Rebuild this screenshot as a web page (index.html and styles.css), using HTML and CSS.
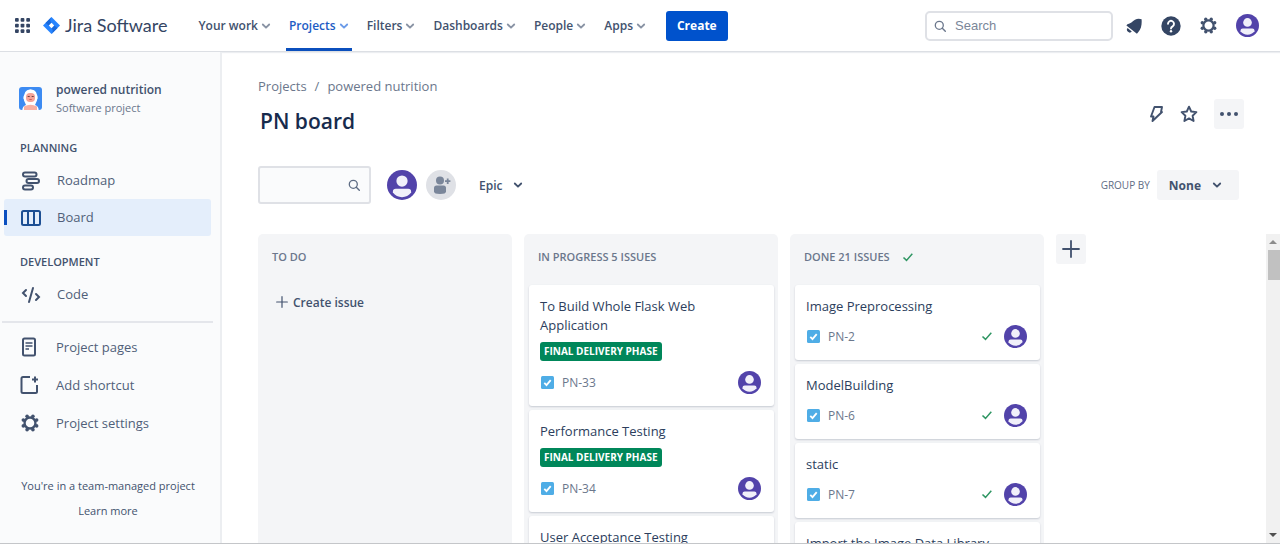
FILE: index.html
```html
<!DOCTYPE html>
<html lang="en">
<head>
<meta charset="utf-8">
<title>PN board - Jira Software</title>
<link rel="stylesheet" href="styles.css">
</head>
<body>
<svg class="sprite" aria-hidden="true">
  <symbol id="chevron" viewBox="0 0 10 10"><path d="M1.800 3.500 5 6.700l3.200-3.200" fill="none" stroke="currentColor" stroke-width="1.800" stroke-linecap="round" stroke-linejoin="round"/></symbol>
  <symbol id="search" viewBox="0 0 14 14"><circle cx="6.300" cy="6.300" r="4" fill="none" stroke="currentColor" stroke-width="1.300"/><path d="m9.300 9.300 3 3" stroke="currentColor" stroke-width="1.400" stroke-linecap="round"/></symbol>
  <symbol id="gear" viewBox="0 0 20 20"><circle cx="10" cy="10" r="6" fill="none" stroke="currentColor" stroke-width="2.600"/><g fill="currentColor"><circle cx="6.800" cy="2.700" r="2"/><circle cx="13.200" cy="2.700" r="2"/><circle cx="17.300" cy="6.800" r="2"/><circle cx="17.300" cy="13.200" r="2"/><circle cx="13.200" cy="17.300" r="2"/><circle cx="6.800" cy="17.300" r="2"/><circle cx="2.700" cy="13.200" r="2"/><circle cx="2.700" cy="6.800" r="2"/></g></symbol>
  <symbol id="avatar" viewBox="0 0 24 24"><circle cx="12" cy="12" r="12" fill="#5243aa"/><circle cx="12" cy="8.800" r="4.500" fill="#f1f0fa"/><path d="M4.700 17.300q0-2.300 2.300-2.300h10q2.300 0 2.300 2.300v.7A9.500 9.500 0 0 1 12 21.700 9.500 9.500 0 0 1 4.700 18z" fill="#f1f0fa"/></symbol>
  <symbol id="task" viewBox="0 0 13 13"><rect width="13" height="13" rx="1.500" fill="#4fade6"/><path d="m3.300 6.900 2.200 2.200 4.200-5" fill="none" stroke="#fff" stroke-width="1.800"/></symbol>
  <symbol id="tick" viewBox="0 0 12 10"><path d="m1.500 5.500 3 2.900L10.300 1.800" fill="none" stroke="#2f9663" stroke-width="1.500"/></symbol>
  <symbol id="plus" viewBox="0 0 18 18"><path d="M9 1v16M1 9h16" stroke="currentColor" stroke-width="1.800" stroke-linecap="round"/></symbol>
</svg>
<div class="app">
  <header class="topbar">
    <button class="plain switcher" aria-label="Switch to"><svg width="15" height="15" viewBox="0 0 16 16" fill="#344563"><rect width="4" height="4" rx="1"/><rect x="6" width="4" height="4" rx="1"/><rect x="12" width="4" height="4" rx="1"/><rect y="6" width="4" height="4" rx="1"/><rect x="6" y="6" width="4" height="4" rx="1"/><rect x="12" y="6" width="4" height="4" rx="1"/><rect y="12" width="4" height="4" rx="1"/><rect x="6" y="12" width="4" height="4" rx="1"/><rect x="12" y="12" width="4" height="4" rx="1"/></svg></button>
    <a class="brand" href="#"><svg width="17" height="17" viewBox="0 0 17 17"><path d="M8.500 0 17 8.500 8.500 17 0 8.500z" fill="#2684ff"/><path d="M8.500 0Q6 3.500 8.500 5.800L5.800 8.500 2.500 5.900z" fill="#1868db"/><path d="M8.500 17q2.500-3.500 0-5.800l2.700-2.700 3.300 2.600z" fill="#1868db"/><path d="m8.500 5.800 2.700 2.700-2.700 2.700-2.700-2.700z" fill="#fff"/></svg><span>Jira Software</span></a>
    <nav class="menu">
      <button class="plain">Your work<svg class="chev"><use href="#chevron"/></svg></button>
      <button class="plain current">Projects<svg class="chev"><use href="#chevron"/></svg></button>
      <button class="plain">Filters<svg class="chev"><use href="#chevron"/></svg></button>
      <button class="plain">Dashboards<svg class="chev"><use href="#chevron"/></svg></button>
      <button class="plain">People<svg class="chev"><use href="#chevron"/></svg></button>
      <button class="plain">Apps<svg class="chev"><use href="#chevron"/></svg></button>
    </nav>
    <button class="create">Create</button>
    <div class="tools">
      <label class="search"><svg width="14" height="14"><use href="#search"/></svg><input type="text" placeholder="Search" aria-label="Search"></label>
      <button class="plain" aria-label="Notifications"><svg width="16" height="16" viewBox="0 0 16 16"><path d="M15.600 1.300C15.900 6 15.500 10.500 12 14.500L10.900 15.700.4 7.600l1-1.400C4.500 5.800 6.500 3.500 9 1.800Q12 .2 15.600 1.300zM1.600 10l4.200 3.500A2.700 2.700 0 0 1 1.600 10z" fill="#344563"/></svg></button>
      <button class="plain" aria-label="Help"><svg width="20" height="20" viewBox="0 0 20 20"><circle cx="10" cy="10" r="9.700" fill="#344563"/><path d="M7 7.800a3 3 0 1 1 4.600 2.600Q10 11.300 10 12.600" fill="none" stroke="#fff" stroke-width="1.900" stroke-linecap="round"/><circle cx="10" cy="15.300" r="1.200" fill="#fff"/></svg></button>
      <button class="plain" aria-label="Settings"><svg width="17" height="17" viewBox="0 0 20 20"><path d="M10 5.200a4.800 4.800 0 1 0 0 9.600 4.800 4.800 0 0 0 0-9.600" fill="none"/><use href="#gear" width="20" height="20"/></svg></button>
      <button class="plain" aria-label="Your profile"><svg width="23" height="23"><use href="#avatar"/></svg></button>
    </div>
  </header>

  <div class="body">
    <aside class="sidebar">
      <div class="project">
        <svg width="23" height="23" viewBox="0 0 23 23"><rect width="23" height="23" rx="3" fill="#3d8bf2"/><path d="M3.300 23q.3-4 3.700-5L5 13.500Q3.500 3 11.500 2.300 20 3 18 13.500L16 18q3.500 1 3.700 5z" fill="#fff"/><path d="M5.500 8.500Q4 9 4.500 12l1.500 1zM17.500 8.500q1.500.5 1 3.500L17 13z" fill="#fff"/><rect x="7" y="6" width="9" height="9" rx="4" fill="#f5a397"/><path d="M5 23v-3.500q6.500-3.500 13 0V23z" fill="#f8b0a2"/><path d="M8.700 9.500h2M12.700 9.500h2" stroke="#6b4242"/><path d="M10.300 12.500h2.500" stroke="#d65c58"/></svg>
        <div><div class="project-name">powered nutrition</div><div class="project-type">Software project</div></div>
      </div>
      <h2 class="group">PLANNING</h2>
      <nav>
        <a class="item" href="#"><svg width="20" height="20" viewBox="0 0 20 20" fill="none" stroke="#42526e" stroke-width="2"><rect x="2" y="1.500" width="13.500" height="4" rx="2"/><rect x="5.500" y="8" width="12.500" height="4" rx="2"/><rect x="2" y="14.500" width="10" height="4" rx="2"/></svg>Roadmap</a>
        <a class="item selected" href="#"><svg width="20" height="20" viewBox="0 0 20 20" fill="none" stroke="#1d4f93" stroke-width="2"><rect x="1" y="3" width="18" height="14" rx="1.500"/><path d="M7 3v14M13 3v14"/></svg>Board</a>
      </nav>
      <h2 class="group">DEVELOPMENT</h2>
      <nav>
        <a class="item" href="#"><svg width="20" height="20" viewBox="0 0 20 20" fill="none" stroke="#42526e" stroke-width="2" stroke-linecap="round"><path d="M5 5 2 8l3 3M12 3 8 17M15 9l3 3-3 3"/></svg>Code</a>
      </nav>
      <hr>
      <nav class="extras">
        <a class="item" href="#"><svg width="20" height="20" viewBox="0 0 20 20" fill="none" stroke="#42526e" stroke-width="2"><rect x="3" y="1.500" width="12" height="17" rx="1.500"/><path d="M5.500 6h7M5.500 9h7M5.500 12h3.500" stroke-width="1.700"/></svg>Project pages</a>
        <a class="item" href="#"><svg width="20" height="20" viewBox="0 0 20 20" fill="none" stroke="#42526e" stroke-width="2"><path d="M10 2H3Q1.500 2 1.500 3.500v13Q1.500 18 3 18h12.500q1.500 0 1.500-1.500V10M15 1.500v6M12 4.500h6"/></svg>Add shortcut</a>
        <a class="item" href="#"><svg width="20" height="20" viewBox="-1 -1 22 22"><use href="#gear" width="20" height="20"/></svg>Project settings</a>
      </nav>
      <div class="note"><p>You're in a team-managed project</p><a href="#">Learn more</a></div>
    </aside>

    <main class="main">
      <nav class="crumbs" aria-label="Breadcrumbs"><a href="#">Projects</a><span>/</span><a href="#">powered nutrition</a></nav>
      <div class="title-row">
        <h1>PN board</h1>
        <div class="actions">
          <button class="plain" aria-label="Automation"><svg width="16" height="18" viewBox="0 0 16 18" fill="none" stroke="#42526e" stroke-width="1.900" stroke-linejoin="round"><path d="M6.500 2H14l-1 5h1L4.500 16l1-4.500H3z"/></svg></button>
          <button class="plain" aria-label="Add to starred"><svg width="18" height="18" viewBox="0 0 18 18" fill="none" stroke="#42526e" stroke-width="1.900" stroke-linejoin="round"><path d="m9 1.700 2.200 4.800 5.200.6-3.800 3.600 1 5.300L9 13.400 4.400 16l1-5.300L1.600 7.100l5.200-.6z"/></svg></button>
          <button class="square" aria-label="More actions"><svg width="18" height="4" viewBox="0 0 18 4" fill="#42526e"><circle cx="2" cy="2" r="2"/><circle cx="9" cy="2" r="2"/><circle cx="16" cy="2" r="2"/></svg></button>
        </div>
      </div>
      <div class="toolbar">
        <label class="filter"><input type="text" aria-label="Search this board"><svg width="14" height="14"><use href="#search"/></svg></label>
        <button class="plain" aria-label="Filter by assignee"><svg width="30" height="30"><use href="#avatar"/></svg></button>
        <button class="plain" aria-label="Add people"><svg width="30" height="30" viewBox="0 0 30 30"><circle cx="15" cy="15" r="15" fill="#dfe1e6"/><g fill="#7a869a"><circle cx="14" cy="10.500" r="4"/><path d="M8 18q0-2.500 2.500-2.500h7Q20 15.500 20 18v3.500Q20 24 14 24t-6-2.500z"/></g><path d="M21.700 8.500v5.400M19 11.200h5.400" stroke="#7a869a" stroke-width="1.800"/></svg></button>
        <button class="plain epic">Epic<svg class="chev"><use href="#chevron"/></svg></button>
        <div class="grouping"><span id="group-label">GROUP BY</span><button class="none" aria-labelledby="group-label group-value"><span id="group-value">None</span><svg class="chev"><use href="#chevron"/></svg></button></div>
      </div>
      <div class="board">
        <section class="column">
          <h2>TO DO</h2>
          <button class="plain add-issue"><svg width="12" height="12"><use href="#plus"/></svg>Create issue</button>
        </section>
        <section class="column">
          <h2>IN PROGRESS 5 ISSUES</h2>
          <article class="card"><h3>To Build Whole Flask Web Application</h3><span class="tag">FINAL DELIVERY PHASE</span><div class="meta"><svg width="13" height="13"><use href="#task"/></svg><span class="key">PN-33</span><svg width="23" height="23"><use href="#avatar"/></svg></div></article>
          <article class="card"><h3>Performance Testing</h3><span class="tag">FINAL DELIVERY PHASE</span><div class="meta"><svg width="13" height="13"><use href="#task"/></svg><span class="key">PN-34</span><svg width="23" height="23"><use href="#avatar"/></svg></div></article>
          <article class="card"><h3>User Acceptance Testing</h3></article>
        </section>
        <section class="column">
          <h2>DONE 21 ISSUES<svg width="12" height="10"><use href="#tick"/></svg></h2>
          <article class="card"><h3>Image Preprocessing</h3><div class="meta"><svg width="13" height="13"><use href="#task"/></svg><span class="key">PN-2</span><svg width="12" height="10"><use href="#tick"/></svg><svg width="23" height="23"><use href="#avatar"/></svg></div></article>
          <article class="card"><h3>ModelBuilding</h3><div class="meta"><svg width="13" height="13"><use href="#task"/></svg><span class="key">PN-6</span><svg width="12" height="10"><use href="#tick"/></svg><svg width="23" height="23"><use href="#avatar"/></svg></div></article>
          <article class="card"><h3>static</h3><div class="meta"><svg width="13" height="13"><use href="#task"/></svg><span class="key">PN-7</span><svg width="12" height="10"><use href="#tick"/></svg><svg width="23" height="23"><use href="#avatar"/></svg></div></article>
          <article class="card"><h3>Import the Image Data Library</h3></article>
        </section>
        <button class="square" aria-label="Create column"><svg width="18" height="18"><use href="#plus"/></svg></button>
        <div class="scrollbar" aria-hidden="true">
          <svg width="8" height="16" viewBox="0 0 8 16"><path d="m4 6 4 4H0z" fill="#8c8c8c"/></svg>
          <div class="thumb"></div>
          <svg width="8" height="16" viewBox="0 0 8 16"><path d="m4 10 4-4H0z" fill="#505050"/></svg>
        </div>
      </div>
    </main>
  </div>
</div>
</body>
</html>
```
FILE: styles.css
```css
* { box-sizing: border-box; }

body {
  margin: 0;
  font-family: "Open Sans", "Noto Sans", sans-serif;
  font-size: 13px;
  line-height: 19px;
  color: #42526e;
  background: #fff;
}

h1, h2, h3, p { margin: 0; }
a { color: inherit; text-decoration: none; }
svg { display: block; flex: none; }
.sprite { position: absolute; width: 0; height: 0; }

button, input {
  font: inherit;
  color: inherit;
  border: 0;
  padding: 0;
}

button { display: flex; align-items: center; justify-content: center; }
.plain { background: none; }
.chev { width: 10px; height: 10px; }

.app {
  display: flex;
  flex-direction: column;
  height: 100vh;
  overflow: hidden;
  border-bottom: 1px solid #c4c6c9;
}

/* Top bar */
.topbar {
  display: flex;
  align-items: center;
  flex: none;
  height: 52px;
  padding: 0 21px 0 15px;
  border-bottom: 1px solid #dcdfe4;
  box-shadow: 0 1px 1px #eceef1;
}

.brand {
  display: flex;
  align-items: center;
  gap: 5px;
  margin: 0 28px 0 13px;
  font-family: Lato, sans-serif;
  font-size: 18px;
  color: #344563;
}

.menu { display: flex; align-self: stretch; gap: 12px; }

.menu button {
  gap: 3px;
  padding: 3px 3px 0;
  font-size: 12px;
  font-weight: 600;
  border-bottom: 3px solid transparent;
}

.menu .chev { color: #8993a4; }
.menu .current { color: #1d5cc4; border-color: #0b4fbd; }
.menu .current .chev { color: #6c9be8; }

.create {
  height: 30px;
  margin-left: 17px;
  padding: 0 11px;
  border-radius: 3px;
  background: #0052cc;
  color: #fff;
  font-size: 12px;
  font-weight: 700;
}

.tools { display: flex; align-items: center; gap: 19px; margin-left: auto; }

.search {
  display: flex;
  align-items: center;
  gap: 8px;
  width: 188px;
  height: 30px;
  padding: 0 6px;
  margin-right: -6px;
  border: 2px solid #dfe1e6;
  border-radius: 5px;
  color: #6b778c;
}

.search input { width: 100%; outline: 0; background: none; font-family: "Liberation Sans", sans-serif; }
.search input::placeholder { color: #7a8699; opacity: 1; }

/* Sidebar */
.body { display: flex; flex: 1; min-height: 0; }

.sidebar {
  flex: none;
  width: 222px;
  padding: 28px 10px 0 4px;
  border-right: 2px solid #eceef1;
  background: #fafbfc;
}

.project { display: flex; align-items: center; gap: 14px; padding-left: 15px; }
.project-name { font-size: 12px; font-weight: 600; }
.project-type { font-size: 11px; line-height: 18px; color: #6b778c; }

.group {
  margin: 21px 0 4px 16px;
  font-size: 11px;
  line-height: 20px;
  font-weight: 600;
}

.group + nav { margin-right: -1px; }
nav + .group { margin-top: 16px; }

.item {
  display: flex;
  align-items: center;
  gap: 16px;
  height: 37px;
  padding-left: 17px;
  color: #505f79;
}

.selected {
  border-radius: 3px;
  background: linear-gradient(#0b4fc0, #0b4fc0) 0 50% / 3px 15px no-repeat, #e4eefb;
}

.sidebar hr {
  height: 2px;
  margin: 8px -3px 5px -2px;
  border: 0;
  background: #e4e6eb;
}

.extras .item { height: 38px; padding-left: 16px; }
.item svg { color: #42526e; }

.note {
  margin: 34px 0 0 2px;
  text-align: center;
  font-size: 11px;
  line-height: 20px;
}

.note a { display: block; margin-top: 5px; }

/* Board page */
.main {
  display: flex;
  flex-direction: column;
  flex: 1;
  min-width: 0;
  padding: 25px 0 0 36px;
}

.crumbs { display: flex; gap: 8px; line-height: 18px; color: #6b778c; }

.title-row {
  display: flex;
  align-items: center;
  justify-content: space-between;
  height: 38px;
  padding: 0 36px 0 2px;
}

h1 { font-size: 21px; line-height: 28px; font-weight: 600; color: #172b4d; padding-top: 14px; }
.actions { display: flex; align-items: center; gap: 16px; }
.square { flex: none; width: 30px; height: 30px; border-radius: 3px; background: #f4f5f7; }

.toolbar {
  display: flex;
  align-items: center;
  height: 38px;
  margin: 33px 41px 30px 0;
  color: #42526e;
}

.filter {
  display: flex;
  align-items: center;
  width: 113px;
  height: 38px;
  margin-right: 16px;
  padding: 0 8px;
  border: 2px solid #dfe1e6;
  border-radius: 3px;
  background: #fafbfc;
}

.filter input { flex: 1; min-width: 0; background: none; outline: 0; }
.filter svg { color: #5e6c84; }
.toolbar .plain + .plain { margin-left: 9px; }
.toolbar .plain + .epic { margin-left: 23px; gap: 11px; font-size: 12px; font-weight: 600; }
.grouping { display: flex; align-items: center; gap: 7px; margin-left: auto; font-size: 10px; color: #5e6c84; }

.none {
  gap: 11px;
  height: 30px;
  padding: 0 17px 0 12px;
  border-radius: 3px;
  background: #f4f5f7;
  font-size: 12px;
  font-weight: 700;
  color: #42526e;
}

.board { display: flex; flex: 1; min-height: 0; gap: 12px; align-items: flex-start; overflow: hidden; }

.column {
  flex: none;
  width: 254px;
  min-height: 100%;
  padding: 0 4px 0 5px;
  border-radius: 5px 5px 0 0;
  background: #f4f5f7;
}

.column h2 {
  display: flex;
  align-items: center;
  gap: 12px;
  height: 51px;
  padding: 0 9px 6px;
  font-size: 11px;
  font-weight: 600;
  color: #6b778c;
}

.add-issue { gap: 5px; height: 34px; padding-left: 13px; font-size: 12px; font-weight: 600; }

.card {
  min-height: 75px;
  margin-bottom: 4px;
  padding: 12px 13px 12px 11px;
  border-radius: 3px;
  background: #fff;
  box-shadow: 0 1px 2px #c6cad2;
}

.card h3 { font-size: 13px; font-weight: 400; color: #2c3e5d; }

.tag {
  display: table;
  margin: 7px 0 9px;
  padding: 0 4px;
  border-radius: 3px;
  background: #00875a;
  color: #fff;
  font-size: 10px;
  font-weight: 700;
}

.meta { display: flex; align-items: center; height: 24px; padding-left: 1px; }
h3 + .meta { margin-top: 8px; }
.key { margin: 0 auto 0 8px; font-size: 12px; color: #6b778c; }
.meta svg + svg { margin-left: 11px; }

.scrollbar {
  display: flex;
  flex-direction: column;
  align-items: center;
  flex: none;
  width: 14px;
  height: 100%;
  margin-left: auto;
  background: #f1f1f1;
}

.thumb { align-self: stretch; height: 30px; margin: 0 0 auto 2px; background: #c1c1c1; }
```
